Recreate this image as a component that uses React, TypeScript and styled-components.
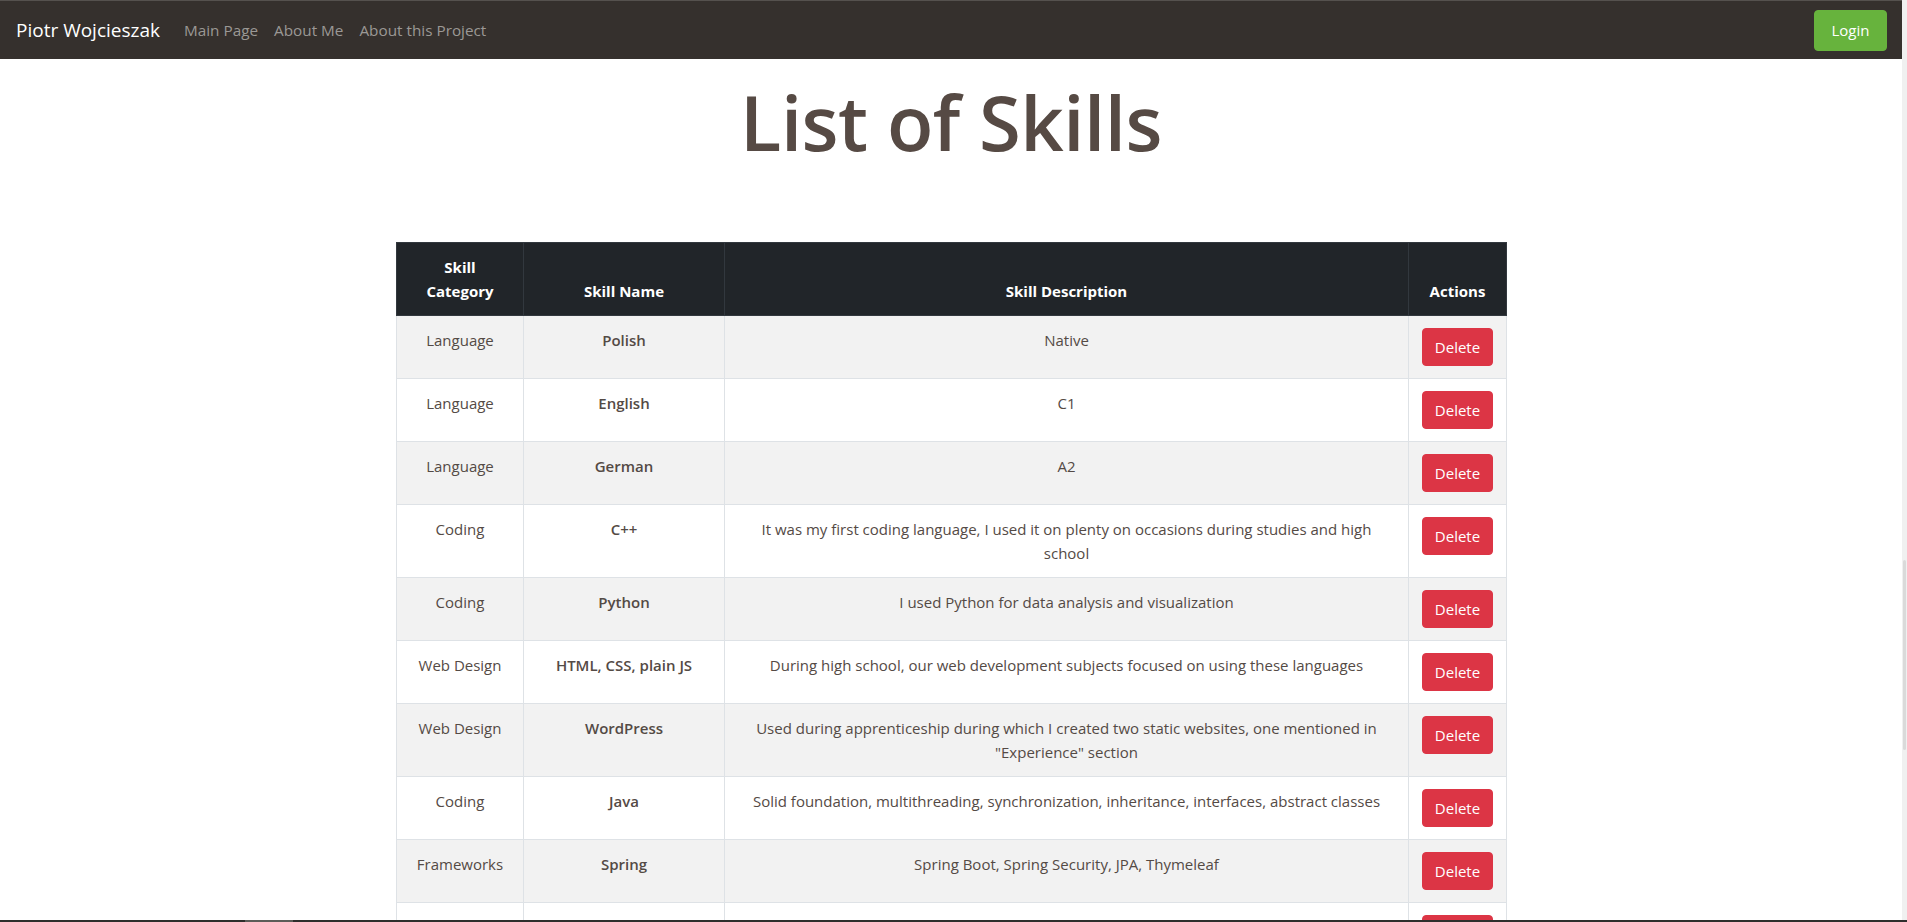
import React from "react";
import styled, { createGlobalStyle } from "styled-components";

const GlobalStyle = createGlobalStyle`
  html, body {
    margin: 0;
    padding: 0;
    height: 100%;
    overflow: hidden;
    background: #ffffff;
  }
  * { box-sizing: border-box; }
  body {
    font-family: "Open Sans", "Noto Sans", sans-serif;
    color: #524742;
  }
`;

const Shell = styled.div`
  display: flex;
  height: 100vh;
  overflow: hidden;
`;

const Main = styled.div`
  flex: 1;
  min-width: 0;
  overflow: hidden;
  background: #ffffff;
`;

const ScrollTrack = styled.div`
  width: 5px;
  flex: none;
  background: #f0f0f0;
  display: flex;
  flex-direction: column;
  padding-top: 560px;
`;

const ScrollThumb = styled.div`
  width: 3px;
  height: 190px;
  margin-left: 1px;
  background: #dadada;
  border-radius: 2px;
`;

const Taskbar = styled.div`
  position: fixed;
  left: 0;
  right: 0;
  bottom: 0;
  height: 2px;
  background: #2e2e2c;
  display: flex;
  padding-left: 245px;
`;

const TaskbarItem = styled.div`
  width: 48px;
  height: 2px;
  background: #5c5c58;
`;

const Navbar = styled.nav`
  height: 59px;
  background: #35302d;
  border-top: 1px solid #55514e;
  display: flex;
  align-items: center;
  padding: 0 15px 0 16px;
`;

const Brand = styled.a`
  color: #ffffff;
  font-size: 19px;
  line-height: 28px;
  margin-right: 16px;
  text-decoration: none;
  white-space: nowrap;
`;

const NavLinks = styled.div`
  display: flex;
  align-items: center;
  flex: 1;
`;

const NavLink = styled.a`
  color: #9b9895;
  font-size: 15.3px;
  line-height: 24px;
  padding: 0 8px;
  text-decoration: none;
  white-space: nowrap;
`;

const LoginButton = styled.button`
  width: 73px;
  height: 41px;
  background: #67b33d;
  color: #ffffff;
  border: 1px solid #67b33d;
  border-radius: 4px;
  font-family: "Open Sans", "Noto Sans", sans-serif;
  font-size: 15px;
  padding: 0;
  cursor: pointer;
`;

const Container = styled.main`
  width: 1110px;
  margin: 0 auto;
`;

const Title = styled.h1`
  margin: 18px 0 75px;
  text-align: center;
  font-size: 76px;
  line-height: 90px;
  font-weight: 600;
  letter-spacing: -0.5px;
  color: #564a44;
`;

const Table = styled.table`
  width: 1110px;
  border-collapse: collapse;
  table-layout: fixed;
  border: 1px solid #dee2e6;
  font-size: 15px;
  line-height: 24px;
`;

const HeadCell = styled.th`
  background: #212529;
  color: #ffffff;
  border: 1px solid #32383e;
  padding: 12px;
  vertical-align: bottom;
  text-align: center;
  font-weight: 700;
  font-size: 15px;
`;

const Row = styled.tr<{ $striped: boolean }>`
  background: ${(p) => (p.$striped ? "#f2f2f2" : "#ffffff")};
`;

const Cell = styled.td<{ $strong?: boolean }>`
  border: 1px solid #dee2e6;
  padding: 12px;
  vertical-align: top;
  text-align: center;
  font-weight: ${(p) => (p.$strong ? 600 : 400)};
  color: #544a45;
`;

const DeleteButton = styled.button`
  height: 38px;
  padding: 6px 12px;
  background: #dc3545;
  color: #ffffff;
  border: 1px solid #dc3545;
  border-radius: 4px;
  font-family: "Open Sans", "Noto Sans", sans-serif;
  font-size: 15px;
  line-height: 24px;
  cursor: pointer;
`;

const skills = [
  { cat: "Language", name: "Polish", desc: "Native" },
  { cat: "Language", name: "English", desc: "C1" },
  { cat: "Language", name: "German", desc: "A2" },
  {
    cat: "Coding",
    name: "C++",
    desc: "It was my first coding language, I used it on plenty on occasions during studies and high school",
  },
  { cat: "Coding", name: "Python", desc: "I used Python for data analysis and visualization" },
  {
    cat: "Web Design",
    name: "HTML, CSS, plain JS",
    desc: "During high school, our web development subjects focused on using these languages",
  },
  {
    cat: "Web Design",
    name: "WordPress",
    desc: 'Used during apprenticeship during which I created two static websites, one mentioned in "Experience" section',
  },
  {
    cat: "Coding",
    name: "Java",
    desc: "Solid foundation, multithreading, synchronization, inheritance, interfaces, abstract classes",
  },
  { cat: "Frameworks", name: "Spring", desc: "Spring Boot, Spring Security, JPA, Thymeleaf" },
  { cat: "", name: "", desc: "" },
];

export default function App() {
  return (
    <>
      <GlobalStyle />
      <Shell>
        <Main>
          <Navbar>
            <Brand href="#">Piotr Wojcieszak</Brand>
            <NavLinks>
              <NavLink href="#">Main Page</NavLink>
              <NavLink href="#">About Me</NavLink>
              <NavLink href="#">About this Project</NavLink>
            </NavLinks>
            <LoginButton>Login</LoginButton>
          </Navbar>
          <Container>
            <Title>List of Skills</Title>
            <Table>
              <colgroup>
                <col style={{ width: 127 }} />
                <col style={{ width: 201 }} />
                <col style={{ width: 684 }} />
                <col style={{ width: 98 }} />
              </colgroup>
              <thead>
                <tr>
                  <HeadCell>Skill Category</HeadCell>
                  <HeadCell>Skill Name</HeadCell>
                  <HeadCell>Skill Description</HeadCell>
                  <HeadCell>Actions</HeadCell>
                </tr>
              </thead>
              <tbody>
                {skills.map((s, i) => (
                  <Row key={i} $striped={i % 2 === 0}>
                    <Cell>{s.cat}</Cell>
                    <Cell $strong>{s.name}</Cell>
                    <Cell>{s.desc}</Cell>
                    <Cell>
                      <DeleteButton>Delete</DeleteButton>
                    </Cell>
                  </Row>
                ))}
              </tbody>
            </Table>
          </Container>
        </Main>
        <ScrollTrack>
          <ScrollThumb />
        </ScrollTrack>
      </Shell>
      <Taskbar>
        <TaskbarItem />
      </Taskbar>
    </>
  );
}
